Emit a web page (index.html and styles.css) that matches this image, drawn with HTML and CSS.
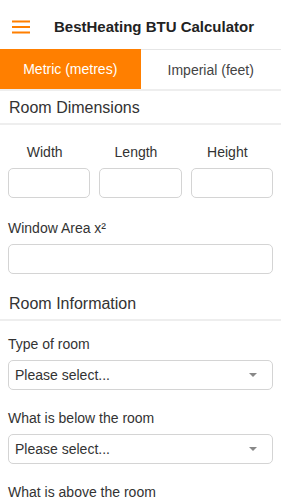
FILE: index.html
```html
<!DOCTYPE html>
<html>
<head>
<meta charset="utf-8">
<link rel="stylesheet" href="styles.css">
</head>
<body>
<header class="topbar">
  <svg class="burger" width="20" height="14" viewBox="0 0 20 14"><path d="M1 1.5H19M1 7H19M1 12.5H19" stroke="#ff7f00" stroke-width="2" fill="none"/></svg>
  <h1 class="title">BestHeating BTU Calculator</h1>
</header>
<nav class="tabs">
  <div class="tab active">Metric (metres)</div>
  <div class="tab">Imperial (feet)</div>
</nav>
<h2 class="section">Room Dimensions</h2>
<div class="dims">
  <div class="dim"><div class="dim-label">Width</div><div class="box"></div></div>
  <div class="dim"><div class="dim-label">Length</div><div class="box"></div></div>
  <div class="dim"><div class="dim-label">Height</div><div class="box"></div></div>
</div>
<div class="field first">
  <div class="label">Window Area x²</div>
  <div class="box"></div>
</div>
<h2 class="section">Room Information</h2>
<div class="field">
  <div class="label">Type of room</div>
  <div class="box select"><span>Please select...</span><span class="arrow"></span></div>
</div>
<div class="field">
  <div class="label">What is below the room</div>
  <div class="box select"><span>Please select...</span><span class="arrow"></span></div>
</div>
<div class="field">
  <div class="label">What is above the room</div>
  <div class="box select"><span>Please select...</span><span class="arrow"></span></div>
</div>
</body>
</html>
```
FILE: styles.css
```css
* { box-sizing: border-box; }
html, body { margin: 0; padding: 0; background: #fff; }
body {
  font-family: "Liberation Sans", Arial, sans-serif;
  color: #333;
  width: 281px;
  overflow: hidden;
}
.topbar {
  height: 49px;
  display: flex;
  align-items: center;
  padding: 4px 0 0 11px;
}
.burger { display: block; margin-right: 23px; }
.title {
  margin: 0;
  font-size: 15px;
  font-weight: bold;
  color: #222;
}
.tabs {
  display: flex;
  height: 42px;
  border-top: 1px solid #e6e6e6;
  border-bottom: 2px solid #eee;
}
.tab {
  flex: 1;
  display: flex;
  align-items: center;
  justify-content: center;
  font-size: 14px;
  color: #444;
}
.tab.active {
  background: #ff7f00;
  color: #fff;
  margin-top: -1px;
}
.section {
  margin: 0;
  font-size: 16px;
  font-weight: normal;
  color: #333;
  padding: 7px 9px 7px;
  height: 34px;
  line-height: 20px;
  border-bottom: 2px solid #eee;
}
.dims {
  display: grid;
  grid-template-columns: repeat(3, 1fr);
  column-gap: 9px;
  padding: 19px 8px 0;
}
.dim-label {
  text-align: center;
  font-size: 14px;
  height: 17px;
  line-height: 17px;
  padding-right: 9px;
  margin-bottom: 7px;
}
.box {
  height: 30px;
  border: 1px solid #d4d4d4;
  border-radius: 5px;
  background: #fff;
}
.field { padding: 20px 8px 0; }
.field.first { padding-top: 22px; }
.section + .field { padding-top: 15px; }
.label {
  font-size: 14px;
  height: 17px;
  line-height: 17px;
  margin-bottom: 7px;
}
.field.first + .section { margin-top: 13px; }
.select {
  display: flex;
  align-items: center;
  justify-content: space-between;
  padding: 0 15px 0 6px;
  font-size: 14px;
  color: #333;
}
.arrow {
  width: 0; height: 0;
  border-left: 4px solid transparent;
  border-right: 4px solid transparent;
  border-top: 4px solid #888;
}
```
